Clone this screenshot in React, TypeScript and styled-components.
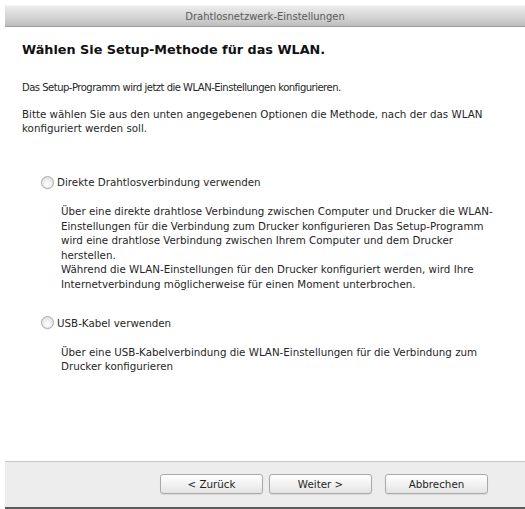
import React from "react";
import styled, { createGlobalStyle } from "styled-components";

const Global = createGlobalStyle`
  html, body { margin: 0; padding: 0; background: #ffffff; }
  body { font-family: "DejaVu Sans", "Liberation Sans", sans-serif; color: #262626; }
`;

const Window = styled.div`
  width: 525px;
  height: 509px;
  display: flex;
  flex-direction: column;
  padding: 5px 0 0 5px;
  box-sizing: border-box;
  background: #ffffff;
  overflow: hidden;
`;

const TitleBar = styled.div`
  height: 20px;
  flex: none;
  display: flex;
  align-items: center;
  justify-content: center;
  background: linear-gradient(#ececec, #d4d4d4 55%, #bebebe);
  border-top: 1px solid #f4f4f4;
  border-bottom: 1px solid #9c9c9c;
  font-size: 10px;
  color: #5a5a5a;
`;

const Body = styled.div`
  flex: 1;
  display: flex;
  flex-direction: column;
  padding: 14px 0 0 17px;
`;

const Heading = styled.h1`
  margin: 0;
  font-size: 12.8px;
  line-height: 18px;
  font-weight: bold;
  color: #111;
`;

const Text = styled.p<{ $top: number; $tight?: boolean }>`
  margin: ${(p) => p.$top}px 0 0 0;
  font-size: ${(p) => (p.$tight ? 10 : 10.3)}px;
  letter-spacing: ${(p) => (p.$tight ? -0.5 : 0)}px;
  line-height: 14px;
  white-space: nowrap;
`;

const OptionRow = styled.label<{ $top: number }>`
  margin: ${(p) => p.$top}px 0 0 19px;
  display: flex;
  align-items: center;
  gap: 3px;
  height: 14px;
  font-size: 10.3px;
`;

const Radio = styled.span`
  width: 13px;
  height: 13px;
  flex: none;
  border-radius: 50%;
  box-sizing: border-box;
  border: 1px solid #adadad;
  background: radial-gradient(circle at 50% 65%, #ffffff, #e8e8e8 60%, #d2d2d2);
  box-shadow: 0 0.5px 1px rgba(0,0,0,0.15);
`;

const Description = styled.p<{ $top: number }>`
  margin: ${(p) => p.$top}px 0 0 39px;
  font-size: 10.3px;
  line-height: 14.6px;
  white-space: nowrap;
`;

const Footer = styled.div`
  height: 48px;
  flex: none;
  background: #ededed;
  border-top: 1px solid #c9c9c9;
  border-bottom: 2px solid #5a5a5a;
  display: flex;
  justify-content: flex-end;
  align-items: flex-start;
  padding: 12px 37px 0 0;
  gap: 6px;
  box-sizing: border-box;
`;

const Button = styled.button<{ $gapLeft?: number }>`
  width: 103px;
  height: 20px;
  margin-left: ${(p) => p.$gapLeft ?? 0}px;
  border: 1px solid #a8a8a8;
  border-radius: 3px;
  background: linear-gradient(#ffffff, #f2f2f2 50%, #e4e4e4);
  font-family: "DejaVu Sans", "Liberation Sans", sans-serif;
  font-size: 10.3px;
  color: #1e1e1e;
  padding: 0;
  box-shadow: 0 1px 1px rgba(0,0,0,0.08);
`;

export default function App() {
  return (
    <>
      <Global />
      <Window>
        <TitleBar>Drahtlosnetzwerk-Einstellungen</TitleBar>
        <Body>
          <Heading>Wählen Sie Setup-Methode für das WLAN.</Heading>
          <Text $top={22} $tight>
            Das Setup-Programm wird jetzt die WLAN-Einstellungen konfigurieren.
          </Text>
          <Text $top={12}>
            Bitte wählen Sie aus den unten angegebenen Optionen die Methode, nach der das WLAN
            <br />
            konfiguriert werden soll.
          </Text>
          <OptionRow $top={40}>
            <Radio />
            Direkte Drahtlosverbindung verwenden
          </OptionRow>
          <Description $top={15}>
            Über eine direkte drahtlose Verbindung zwischen Computer und Drucker die WLAN-
            <br />
            Einstellungen für die Verbindung zum Drucker konfigurieren Das Setup-Programm
            <br />
            wird eine drahtlose Verbindung zwischen Ihrem Computer und dem Drucker
            <br />
            herstellen.
            <br />
            Während die WLAN-Einstellungen für den Drucker konfiguriert werden, wird Ihre
            <br />
            Internetverbindung möglicherweise für einen Moment unterbrochen.
          </Description>
          <OptionRow $top={24}>
            <Radio />
            USB-Kabel verwenden
          </OptionRow>
          <Description $top={15}>
            Über eine USB-Kabelverbindung die WLAN-Einstellungen für die Verbindung zum
            <br />
            Drucker konfigurieren
          </Description>
        </Body>
        <Footer>
          <Button>&lt; Zurück</Button>
          <Button>Weiter &gt;</Button>
          <Button $gapLeft={7}>Abbrechen</Button>
        </Footer>
      </Window>
    </>
  );
}
